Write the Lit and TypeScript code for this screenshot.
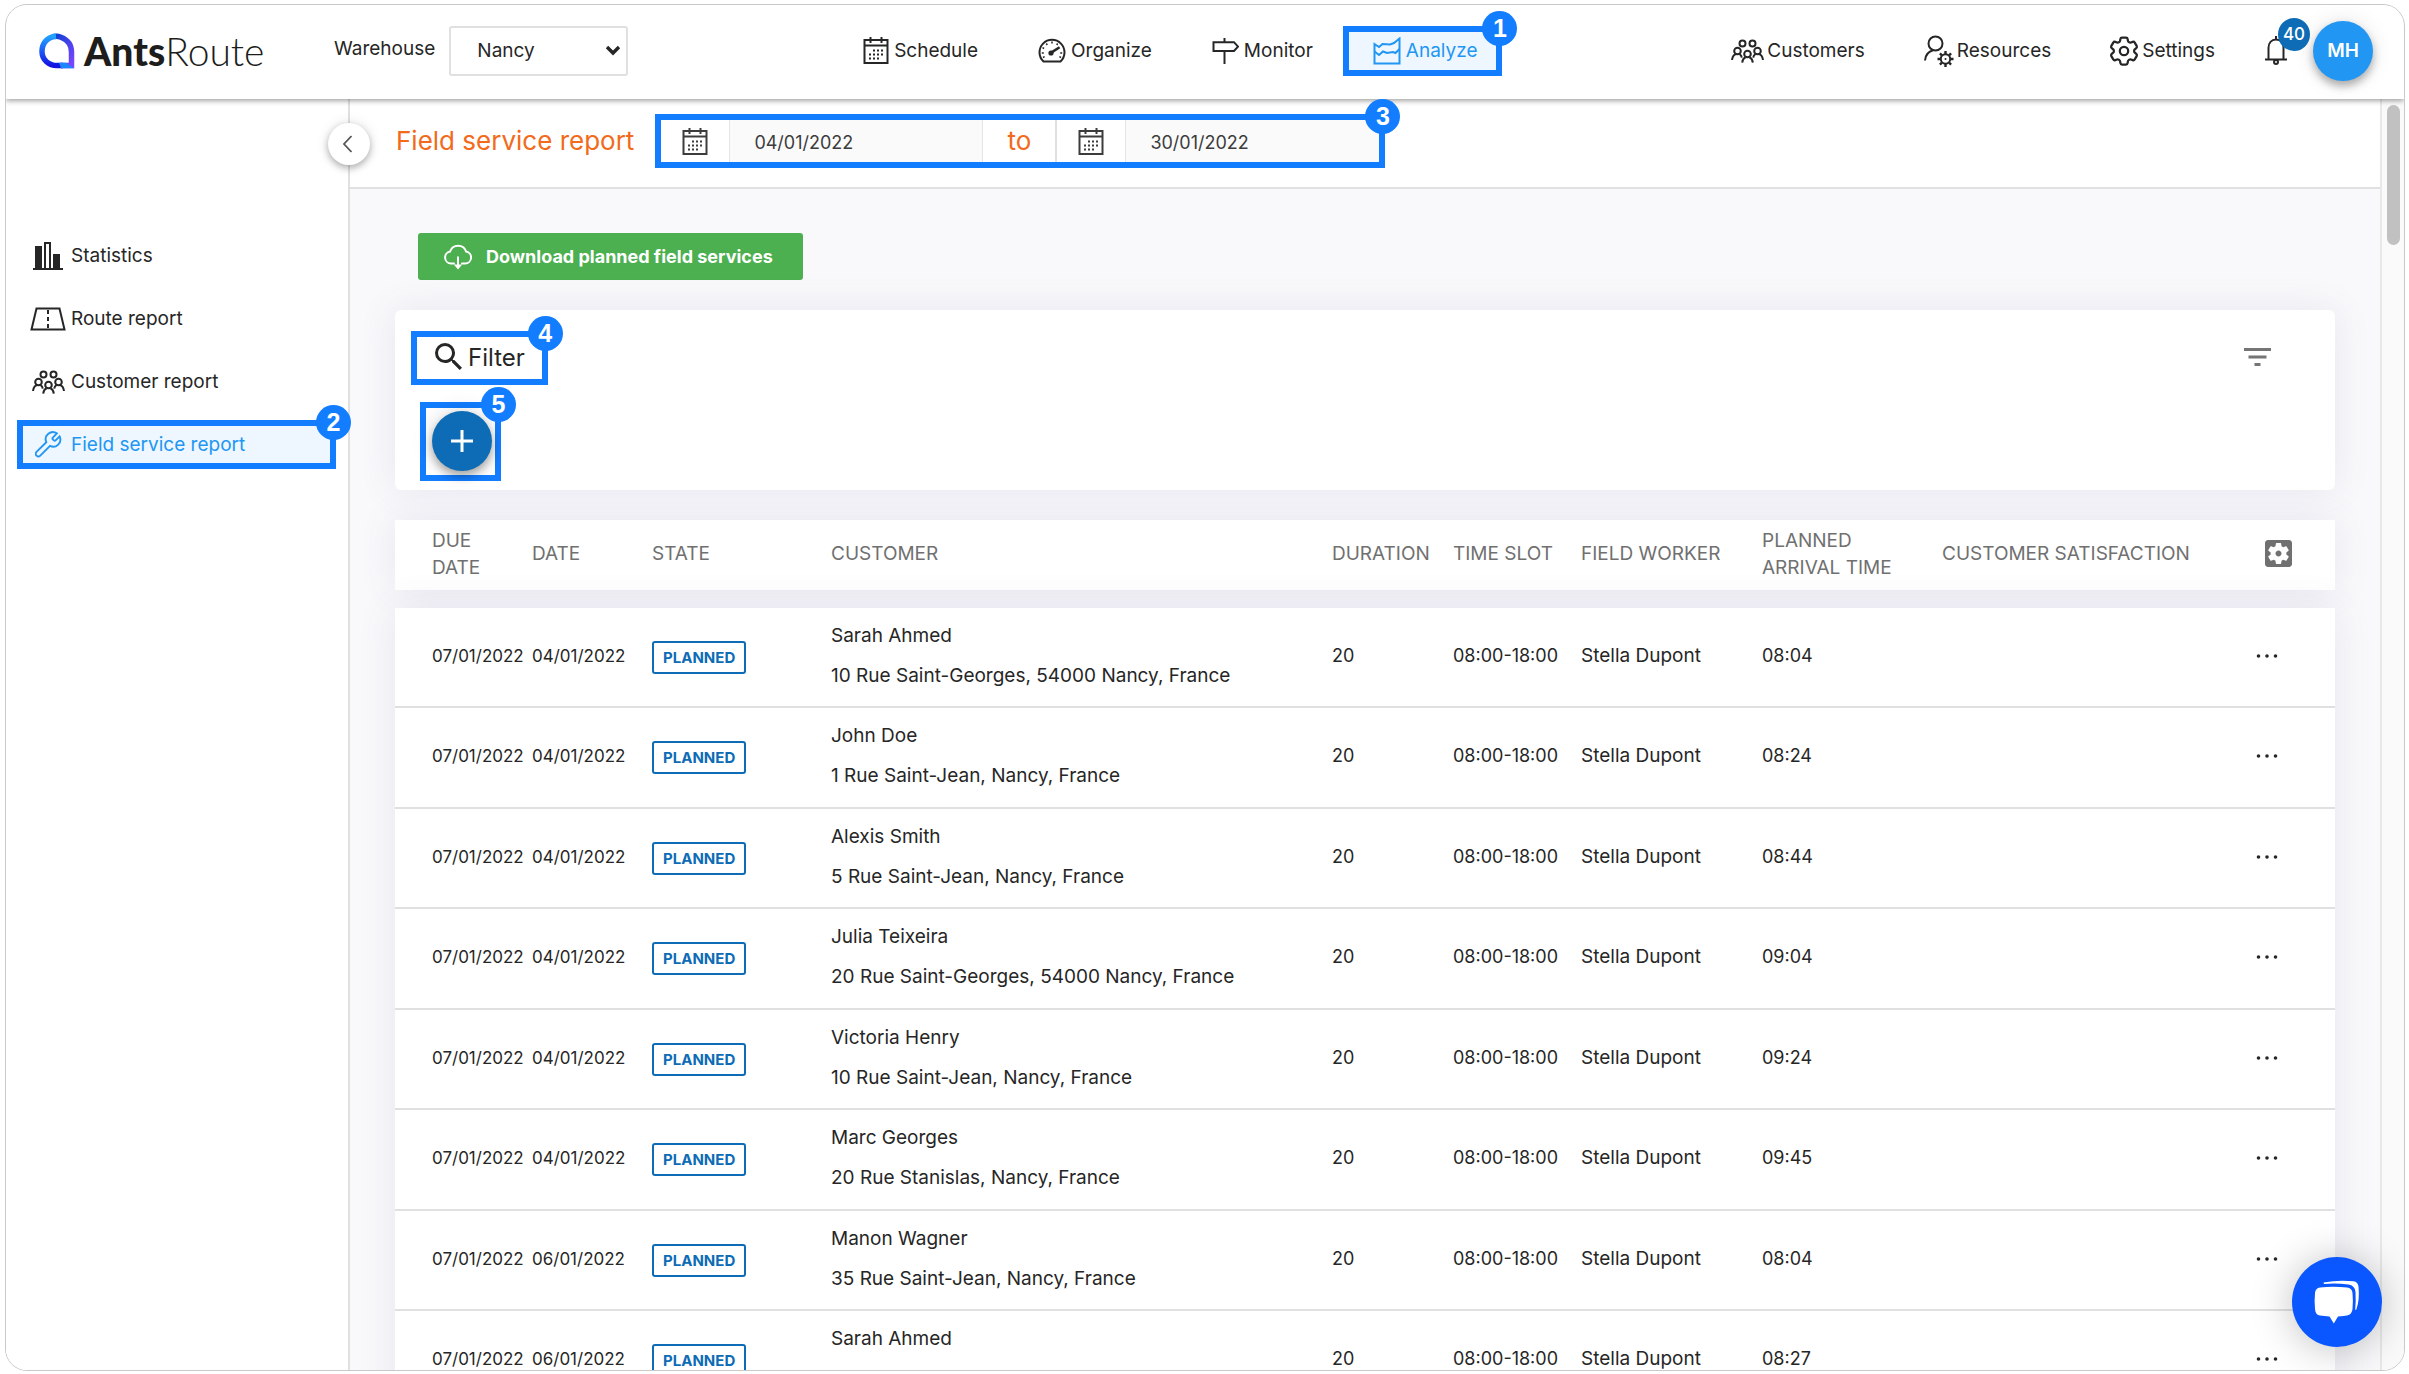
import { LitElement, html, css, svg } from 'lit';
import { customElement, property } from 'lit/decorators.js';
import { classMap } from 'lit/directives/class-map.js';

const GEAR =
  'M9.594 3.94c.09-.542.56-.94 1.11-.94h2.593c.55 0 1.02.398 1.11.94l.213 1.281c.063.374.313.686.645.87.074.04.147.083.22.127.325.196.72.257 1.075.124l1.217-.456a1.125 1.125 0 0 1 1.37.49l1.296 2.247a1.125 1.125 0 0 1-.26 1.431l-1.003.827c-.293.241-.438.613-.43.992a7.723 7.723 0 0 1 0 .255c-.008.378.137.75.43.991l1.004.827c.424.35.534.955.26 1.43l-1.298 2.247a1.125 1.125 0 0 1-1.369.491l-1.217-.456c-.355-.133-.75-.072-1.076.124a6.47 6.47 0 0 1-.22.128c-.331.183-.581.495-.644.869l-.213 1.281c-.09.543-.56.94-1.11.94h-2.594c-.55 0-1.019-.398-1.11-.94l-.213-1.281c-.062-.374-.312-.686-.644-.87a6.52 6.52 0 0 1-.22-.127c-.325-.196-.72-.257-1.076-.124l-1.217.456a1.125 1.125 0 0 1-1.369-.49l-1.297-2.247a1.125 1.125 0 0 1 .26-1.431l1.004-.827c.292-.24.437-.613.43-.991a6.932 6.932 0 0 1 0-.255c.007-.38-.138-.751-.43-.992l-1.004-.827a1.125 1.125 0 0 1-.26-1.43l1.297-2.247a1.125 1.125 0 0 1 1.37-.491l1.216.456c.356.133.751.072 1.076-.124.072-.044.146-.086.22-.128.332-.183.582-.495.644-.869l.214-1.28Z';
const GEAR_BOX =
  'M12 10c-1.1 0-2 .9-2 2s.9 2 2 2 2-.9 2-2-.9-2-2-2zm7-7H5c-1.11 0-2 .9-2 2v14c0 1.1.89 2 2 2h14c1.11 0 2-.9 2-2V5c0-1.1-.89-2-2-2zm-1.75 9c0 .23-.02.46-.05.68l1.48 1.16c.13.11.17.3.08.45l-1.4 2.42c-.09.15-.27.21-.43.15l-1.74-.7c-.36.28-.76.51-1.18.69l-.26 1.85c-.03.17-.18.3-.35.3h-2.8c-.17 0-.32-.13-.35-.29l-.26-1.85c-.43-.18-.82-.41-1.18-.69l-1.74.7c-.16.06-.34 0-.43-.15l-1.4-2.42c-.09-.15-.05-.34.08-.45l1.48-1.16c-.03-.23-.05-.46-.05-.69 0-.23.02-.46.05-.68l-1.48-1.16c-.13-.11-.17-.3-.08-.45l1.4-2.42c.09-.15.27-.21.43-.15l1.74.7c.36-.28.76-.51 1.18-.69l.26-1.85c.03-.17.18-.3.35-.3h2.8c.17 0 .32.13.35.29l.26 1.85c.43.18.82.41 1.18.69l1.74-.7c.16-.06.34 0 .43.15l1.4 2.42c.09.15.05.34-.08.45l-1.48 1.16c.03.23.05.46.05.69z';

interface Icon { w: number; h: number; box?: string; body: unknown; }

const ICONS: Record<string, Icon> = {
  calendar: { w: 26, h: 27, body: svg`
    <rect x="1.5" y="3" width="23" height="23"/><path d="M1 8.5h24M7.5 0v6M18.5 0v6"/>
    <path d="M10 13.5h12M6 17.5h16M6 21.5h10" stroke-dasharray="2 2"/>` },
  gauge: { w: 28, h: 25, body: svg`
    <path d="M5.5 23.5a12.5 12.5 0 1 1 17 0z"/>
    <path d="M14 3.5v2M8.3 5.5l1 1.5M4.5 9.7l1.6.8M3.8 15h2M5 19.5l1.6-.8M24.2 15h-2M23 19.5l-1.6-.8M19.7 5.5l-1 1.5" stroke-width="1.5"/>
    <path d="M13.6 14.4l8-5.2" stroke-width="2.5"/><circle cx="13" cy="15" r="2.6" fill="currentColor" stroke="none"/>` },
  sign: { w: 27, h: 26, body: svg`<path d="M1.5 4.2h20.5l4 4.4-4 4.4h-20.5zM12.5 0v4M12.5 13v13"/>` },
  chart: { w: 28, h: 28, body: svg`
    <path d="M1.5 26.5V7l4.5 3 3.5-3 7.5.5 4-1.5 5.5-4.5v25z"/>
    <path d="M1.5 14.5l4.5 3.5 4-3.5 4 1.5 6-1 2.5 1 4-4"/>` },
  users: { w: 33, h: 24, body: svg`
    <circle cx="11.5" cy="4.5" r="3"/><circle cx="21.5" cy="4.5" r="3"/>
    <circle cx="6.5" cy="12" r="3.3"/><circle cx="26.5" cy="12" r="3.3"/><circle cx="16.5" cy="15" r="3.3"/>
    <path d="M1 21c.4-3.3 2-5.5 4.3-6M8.5 15c1.3.9 2 2 2.3 3.7M32 21c-.4-3.3-2-5.5-4.3-6M24.5 15c-1.3.9-2 2-2.3 3.7M11.2 23.7c.3-2.7 1.6-4.7 3.4-5.4M21.8 23.7c-.3-2.7-1.6-4.7-3.4-5.4"/>` },
  resource: { w: 31, h: 34, body: svg`
    <circle cx="12.5" cy="9.5" r="7"/><path d="M2 26.5c.3-5.5 3.2-9 8.5-10.5"/>
    <circle cx="22.5" cy="25" r="4.7"/>
    <path d="M22.5 17v3M22.5 30v3M14.5 25h3M27.5 25h3M16.9 19.4l2 2M26.1 28.6l2 2M28.1 19.4l-2 2M18.9 28.6l-2 2" stroke-width="2.4"/>
    <circle cx="22.5" cy="25" r="1" fill="currentColor" stroke="none"/>` },
  settings: { w: 30, h: 30, box: '2 2 20 20', body: svg`<g stroke-width="1.5"><path d="${GEAR}"/><circle cx="12" cy="12" r="2.8"/></g>` },
  bell: { w: 22, h: 29, body: svg`
    <path d="M0 23.5h22M3.5 23V12c0-5 3-8.5 7.5-8.5s7.5 3.5 7.5 8.5v11M11 0v3"/><circle cx="11" cy="26" r="2"/>` },
  stats: { w: 30, h: 30, body: svg`
    <path d="M2 5h7v22H2zM20 13h7v14h-7z" fill="currentColor" stroke="none"/>
    <path d="M12 27V2h5v25M0 28h30"/>` },
  road: { w: 36, h: 24, body: svg`<path d="M6.5 1.5h23l5 21h-33z"/><path d="M18 3v19" stroke-dasharray="4 3"/>` },
  wrench: { w: 27, h: 27, box: '1.5 1 21.5 21.5', body: svg`
    <path stroke-width="1.5" d="M15.7 6.3a1 1 0 0 0 0 1.4l.8.8a1 1 0 0 0 1.4 0l3.2-3.2a5.7 5.7 0 0 1-7.6 7.6l-7.8 7.7a2.12 2.12 0 0 1-3-3l7.8-7.7a5.7 5.7 0 0 1 8.4-7z"/>` },
  cloud: { w: 30, h: 26, body: svg`
    <path d="M11 19.5H8a6 6 0 0 1-1-11.9 8.5 8.5 0 0 1 16.2 0 6 6 0 0 1-1 11.9h-3.2" stroke-linecap="round"/>
    <path d="M15 12.5v9"/><path d="M10.8 20.5h8.4L15 25.5z" fill="currentColor" stroke="none"/>` },
  search: { w: 27, h: 27, box: '3 3 17.5 17.5', body: svg`
    <path fill="currentColor" stroke="none" d="M15.5 14h-.79l-.28-.27A6.471 6.471 0 0 0 16 9.5 6.5 6.5 0 1 0 9.5 16c1.61 0 3.09-.59 4.23-1.57l.27.28v.79l5 4.99L20.49 19l-4.99-5zm-6 0C7.01 14 5 11.99 5 9.5S7.01 5 9.5 5 14 7.01 14 9.5 11.99 14 9.5 14z"/>` },
  filter: { w: 27, h: 18, box: '3 6 18 12', body: svg`<path fill="currentColor" stroke="none" d="M10 18h4v-2h-4v2zM3 6v2h18V6H3zm3 7h12v-2H6v2z"/>` },
  plus: { w: 22, h: 22, body: svg`<path d="M11 0v22M0 11h22" stroke-width="3"/>` },
  gearBox: { w: 27, h: 27, box: '3 3 18 18', body: svg`<path fill="currentColor" stroke="none" d="${GEAR_BOX}"/>` },
  dots: { w: 22, h: 6, body: svg`<g fill="currentColor" stroke="none"><circle cx="2.5" cy="3" r="1.8"/><circle cx="11" cy="3" r="1.8"/><circle cx="19.5" cy="3" r="1.8"/></g>` },
  back: { w: 11, h: 18, body: svg`<path d="M9.5 1L2 9l7.5 8" stroke-width="1.8"/>` },
  down: { w: 16, h: 11, body: svg`<path d="M2 2l6 6 6-6" stroke-width="3.4"/>` },
  chat: { w: 46, h: 46, body: svg`<g fill="currentColor" stroke="none">
    <path d="M6 8.5Q19 7 33 8.5q5 .5 5.5 5.5.8 8 0 16-.5 5.5-5.5 6.5-3 .5-9 .9L19.8 44.5 15.5 37.4q-5-.3-9.5-.9Q1.5 36 1 30q-.8-8 0-16 .5-5 5-5.5z"/>
    <path d="M9.500 3.500Q25 .5 39.5 2.3q4.500.7 5 5.200 1.300 13-2 22.500-.5 1.500-1.300.5.800-9 .3-17.500-.5-6.500-7-7.500Q22 4 10 5z"/></g>` },
};

const icon = (name: string) => {
  const i = ICONS[name];
  return html`<svg width=${i.w} height=${i.h} viewBox=${i.box ?? `0 0 ${i.w} ${i.h}`}
    fill="none" stroke="currentColor" stroke-width="2" aria-hidden="true">${i.body}</svg>`;
};

const shared = css`
  *, *::before, *::after { box-sizing: border-box; }
  svg { display: block; flex: none; }
  button, input, select { font: inherit; color: inherit; margin: 0; }
  button { background: none; border: 0; padding: 0; cursor: pointer; }
  a { color: inherit; text-decoration: none; }
  .callout { position: relative; border: 6px solid #127dff; }
  .step {
    position: absolute; top: -21px; right: -21px; z-index: 3; width: 35px; height: 35px;
    border-radius: 50%; background: #127dff; color: #fff;
    font: bold 25px/35px "Liberation Sans", sans-serif; text-align: center;
  }
`;

@customElement('ar-header')
export class ArHeader extends LitElement {
  static styles = [shared, css`
    :host {
      display: flex; align-items: center; justify-content: space-between; position: relative; z-index: 2;
      box-sizing: border-box; height: 94px; padding: 0 31px 3px 33px; background: #fff; box-shadow: 0 2px 5px rgba(0, 0, 0, .36);
    }
    .left, .nav, .right, .link { display: flex; align-items: center; }
    .nav { margin-left: 5px; }
    .logo { display: flex; align-items: center; gap: 9px; width: 228px; margin-right: 67px; }
    .word { font: 900 39px/48px Lato, sans-serif; color: #1d1d1b; }
    .thin { font-weight: 300; }
    .label { margin-right: 14px; padding-bottom: 4px; }
    .pick { display: flex; align-items: center; position: relative; }
    .pick select {
      appearance: none; width: 179px; height: 50px; padding: 0 26px; border: 2px solid #e0e0e0;
      border-radius: 3px; background: #fff;
    }
    .pick svg { position: absolute; right: 7px; pointer-events: none; }
    .link { gap: 5px; height: 50px; padding: 0 30px; white-space: nowrap; }
    .right .link { gap: 3px; padding: 0 29px; }
    .link.callout { padding: 0 19px 0 24px; background: #eef7ff; color: #2196f3; }
    .bell { position: relative; margin: 0 26px 0 21px; }
    .count {
      position: absolute; left: 13px; top: -18px; width: 32px; height: 33px; border-radius: 50%;
      background: #0d6cb5; color: #fff; font-size: 17px; line-height: 33px; font-weight: 500; text-align: center;
    }
    .avatar {
      width: 60px; height: 60px; border-radius: 50%; background: #2196f3; color: #fff; font-size: 19px; font-weight: 600;
      box-shadow: 0 5px 8px rgba(0, 0, 0, .3), 0 0 22px rgba(0, 0, 0, .1);
    }
  `];

  render() {
    return html`
      <div class="left">
        <a class="logo" href="#home">
          <svg width="36" height="36" viewBox="0 0 36 36" fill="none" stroke-width="5.5" aria-hidden="true">
            <defs>
              <linearGradient id="a" x1="0" y1="0" x2="1" y2="1"><stop offset="0" stop-color="#0a3fd0"/><stop offset="1" stop-color="#7a45ff"/></linearGradient>
              <linearGradient id="b" x1="0" y1="0" x2="0" y2="1"><stop offset="0" stop-color="#22a2ff"/><stop offset=".5" stop-color="#1c5cf5"/><stop offset="1" stop-color="#1212e2"/></linearGradient>
            </defs>
            <path d="M15 3.5Q18 2.6 22 4.2C29 7 32.5 12 32.5 19v13.5H22" stroke="url(#a)"/>
            <path d="M17 3.2C8 4 3 10.5 3 18.5 3 27 10 32.5 18 32.5h6" stroke="url(#b)"/>
            <path d="M20 29.8h7l8 5.4H22z" fill="#1c86ff"/>
          </svg>
          <span class="word">Ants<span class="thin">Route</span></span>
        </a>
        <label class="label" for="warehouse">Warehouse</label>
        <div class="pick">
          <select id="warehouse"><option>Nancy</option></select>
          ${icon('down')}
        </div>
      </div>
      <nav class="nav">
        <a class="link" href="#schedule">${icon('calendar')}Schedule</a>
        <a class="link" href="#organize">${icon('gauge')}Organize</a>
        <a class="link" href="#monitor">${icon('sign')}Monitor</a>
        <a class="link callout" href="#analyze">${icon('chart')}Analyze<span class="step">1</span></a>
      </nav>
      <div class="right">
        <a class="link" href="#customers">${icon('users')}Customers</a>
        <a class="link" href="#resources">${icon('resource')}Resources</a>
        <a class="link" href="#settings">${icon('settings')}Settings</a>
        <button class="bell" aria-label="Notifications">${icon('bell')}<span class="count">40</span></button>
        <button class="avatar">MH</button>
      </div>`;
  }
}

@customElement('ar-sidebar')
export class ArSidebar extends LitElement {
  static styles = [shared, css`
    :host { display: block; box-sizing: border-box; position: relative; z-index: 1; flex: none; width: 344px; padding-top: 132px; border-right: 2px solid #e0e0e0; background: #fff; }
    .list { list-style: none; margin: 0; padding: 0 12px 0 11px; display: flex; flex-direction: column; gap: 14px; }
    .item { display: flex; align-items: center; height: 49px; border: 6px solid transparent; padding-left: 7px; }
    .item.callout { border-color: #127dff; background: #eef7ff; color: #2196f3; }
    .glyph { display: flex; justify-content: center; width: 36px; margin-right: 5px; }
    .fold {
      position: absolute; top: 24px; right: -22px; width: 42px; height: 42px; border-radius: 50%; background: #fff; color: #555;
      display: flex; align-items: center; justify-content: center; padding-right: 3px;
      box-shadow: 0 3px 7px rgba(0, 0, 0, .28), 0 0 14px rgba(0, 0, 0, .1);
    }
  `];

  render() {
    const items = [['stats', 'Statistics'], ['road', 'Route report'], ['users', 'Customer report'], ['wrench', 'Field service report']];
    return html`
      <button class="fold" aria-label="Collapse menu">${icon('back')}</button>
      <ul class="list">
        ${items.map(([glyph, text], n) => html`
          <li><a class=${classMap({ item: true, callout: n === 3 })} href="#report">
            <span class="glyph">${icon(glyph)}</span>${text}${n === 3 ? html`<span class="step">2</span>` : ''}
          </a></li>`)}
      </ul>`;
  }
}

interface Visit { date: string; name: string; address: string; arrival: string; }

@customElement('ar-visits')
export class ArVisits extends LitElement {
  @property({ attribute: false }) visits: Visit[] = [];

  static styles = [shared, css`
    :host { display: block; }
    table, thead, tbody { display: block; }
    thead, tbody { background: #fff; box-shadow: 0 0 36px rgba(100, 90, 160, .12); }
    thead { margin-bottom: 18px; color: #707070; }
    tr {
      display: grid; align-items: center; padding-left: 37px;
      grid-template-columns: 100fr 120fr 179fr 501fr 121fr 128fr 181fr 180fr 314fr 79fr;
    }
    thead tr { height: 70px; padding-bottom: 3px; }
    tbody tr { height: 100px; padding-bottom: 3px; border-bottom: 2px solid #e0e0e0; }
    tbody tr:nth-child(even) { height: 101px; }
    th, td { padding: 0; text-align: left; font-weight: 400; white-space: nowrap; }
    th { line-height: 27px; padding-right: 20px; white-space: normal; }
    .tools { padding: 0 0 0 9px; }
    .date { font-size: 17px; }
    .time { font-size: 18px; }
    .who { line-height: 40px; }
    .tag { padding-top: 3px; }
    .state {
      display: inline-block; padding: 0 9px; border: 2px solid #0d6cb5; border-radius: 3px; color: #0d6cb5;
      font-size: 15px; line-height: 29px; font-weight: 700;
    }
    button { display: block; }
  `];

  render() {
    return html`
      <table>
        <thead><tr>
          <th>DUE DATE</th><th>DATE</th><th>STATE</th><th>CUSTOMER</th><th>DURATION</th><th>TIME SLOT</th>
          <th>FIELD WORKER</th><th>PLANNED ARRIVAL TIME</th><th>CUSTOMER SATISFACTION</th>
          <th class="tools"><button aria-label="Columns">${icon('gearBox')}</button></th>
        </tr></thead>
        <tbody>
          ${this.visits.map(v => html`
            <tr>
              <td class="date">07/01/2022</td><td class="date">${v.date}</td>
              <td class="tag"><span class="state">PLANNED</span></td>
              <td class="who"><div>${v.name}</div><div>${v.address}</div></td>
              <td class="time">20</td><td class="time">08:00-18:00</td><td>Stella Dupont</td>
              <td class="time">${v.arrival}</td><td></td>
              <td><button aria-label="More actions">${icon('dots')}</button></td>
            </tr>`)}
        </tbody>
      </table>`;
  }
}

@customElement('app-root')
export class AppRoot extends LitElement {
  private visits: Visit[] = [
    { date: '04/01/2022', name: 'Sarah Ahmed', address: '10 Rue Saint-Georges, 54000 Nancy, France', arrival: '08:04' },
    { date: '04/01/2022', name: 'John Doe', address: '1 Rue Saint-Jean, Nancy, France', arrival: '08:24' },
    { date: '04/01/2022', name: 'Alexis Smith', address: '5 Rue Saint-Jean, Nancy, France', arrival: '08:44' },
    { date: '04/01/2022', name: 'Julia Teixeira', address: '20 Rue Saint-Georges, 54000 Nancy, France', arrival: '09:04' },
    { date: '04/01/2022', name: 'Victoria Henry', address: '10 Rue Saint-Jean, Nancy, France', arrival: '09:24' },
    { date: '04/01/2022', name: 'Marc Georges', address: '20 Rue Stanislas, Nancy, France', arrival: '09:45' },
    { date: '06/01/2022', name: 'Manon Wagner', address: '35 Rue Saint-Jean, Nancy, France', arrival: '08:04' },
    { date: '06/01/2022', name: 'Sarah Ahmed', address: '10 Rue Saint-Georges, 54000 Nancy, France', arrival: '08:27' },
  ];

  static styles = [shared, css`
    :host { display: block; height: 100vh; padding: 4px 4px 3px 5px; background: #fff; color: #262626; font: 19px/24px Inter, "Open Sans", sans-serif; box-sizing: border-box; }
    .frame { position: relative; display: flex; flex-direction: column; height: 100%; border: 1px solid #c9c9c9; border-radius: 22px; overflow: hidden; }
    .body { display: flex; flex: 1; min-height: 0; }
    .main { flex: 1; min-width: 0; overflow: hidden; background: #f9f9fb; }
    .track { flex: none; width: 24px; padding: 6px 4px 0 5px; border-left: 2px solid #e8e8e8; background: #fafafa; }
    .thumb { height: 140px; border-radius: 7px; background: #c1c1c1; }
    .bar { display: flex; align-items: center; gap: 21px; height: 90px; padding: 0 46px 4px; border-bottom: 2px solid #e0e0e3; background: #fff; }
    .title, .to { color: #f26a1b; font-size: 26px; line-height: 32px; font-weight: 400; }
    .title { margin: 0; white-space: nowrap; }
    .range { display: flex; align-items: stretch; height: 54px; color: #3c3c3c; }
    .cell, .to { display: flex; align-items: center; justify-content: center; width: 68px; }
    .to { width: 74px; border-right: 2px solid #e0e0e0; }
    .range input { width: 254px; padding: 3px 24px 0; border: solid #e4e4e4; border-width: 0 1px; background: #fafafa; font-size: 18px; }
    .range input:last-of-type { border-right: 0; }
    .content { padding: 44px 45px 0; }
    .download {
      display: flex; align-items: center; gap: 13px; height: 47px; margin: 0 0 30px 23px; padding: 0 30px 0 25px;
      border-radius: 3px; background: #4caf50; color: #fff; font-size: 18px; font-weight: 700;
    }
    .card { display: flex; justify-content: space-between; margin-bottom: 30px; padding: 21px 64px 9px 16px; border-radius: 6px; background: #fff; box-shadow: 0 0 36px rgba(100, 90, 160, .12); }
    .filters { display: flex; flex-direction: column; align-items: flex-start; gap: 17px; }
    .find { display: flex; align-items: center; gap: 6px; height: 54px; padding: 0 17px 0 18px; font-size: 24px; }
    .find svg { margin-bottom: 4px; }
    .adder { margin-left: 9px; padding: 3px 3px 4px 6px; }
    .add {
      display: flex; align-items: center; justify-content: center; width: 60px; height: 60px; border-radius: 50%;
      background: #0d6cb5; color: #fff; box-shadow: 0 5px 8px rgba(0, 0, 0, .3), 0 0 22px rgba(0, 0, 0, .14);
    }
    .sort { align-self: flex-start; padding: 17px 0; color: #757575; }
    .chat {
      position: absolute; right: 22px; bottom: 23px; z-index: 4; display: flex; align-items: center; justify-content: center;
      width: 90px; height: 90px; border-radius: 50%; background: #0a57ff; color: #fff; box-shadow: 0 2px 40px rgba(0, 0, 0, .25);
    }
  `];

  render() {
    return html`
      <div class="frame">
        <ar-header></ar-header>
        <div class="body">
          <ar-sidebar></ar-sidebar>
          <main class="main">
            <div class="bar">
              <h1 class="title">Field service report</h1>
              <div class="range callout">
                <label class="cell" for="from" aria-label="From">${icon('calendar')}</label>
                <input id="from" type="text" value="04/01/2022">
                <span class="to">to</span>
                <label class="cell" for="until" aria-label="Until">${icon('calendar')}</label>
                <input id="until" type="text" value="30/01/2022">
                <span class="step">3</span>
              </div>
            </div>
            <div class="content">
              <button class="download">${icon('cloud')}Download planned field services</button>
              <section class="card">
                <div class="filters">
                  <button class="find callout">${icon('search')}Filter<span class="step">4</span></button>
                  <div class="adder callout">
                    <button class="add" aria-label="Add filter">${icon('plus')}</button><span class="step">5</span>
                  </div>
                </div>
                <button class="sort" aria-label="Filter options">${icon('filter')}</button>
              </section>
              <ar-visits .visits=${this.visits}></ar-visits>
            </div>
          </main>
          <div class="track"><div class="thumb"></div></div>
        </div>
        <button class="chat" aria-label="Open chat">${icon('chat')}</button>
      </div>`;
  }
}
